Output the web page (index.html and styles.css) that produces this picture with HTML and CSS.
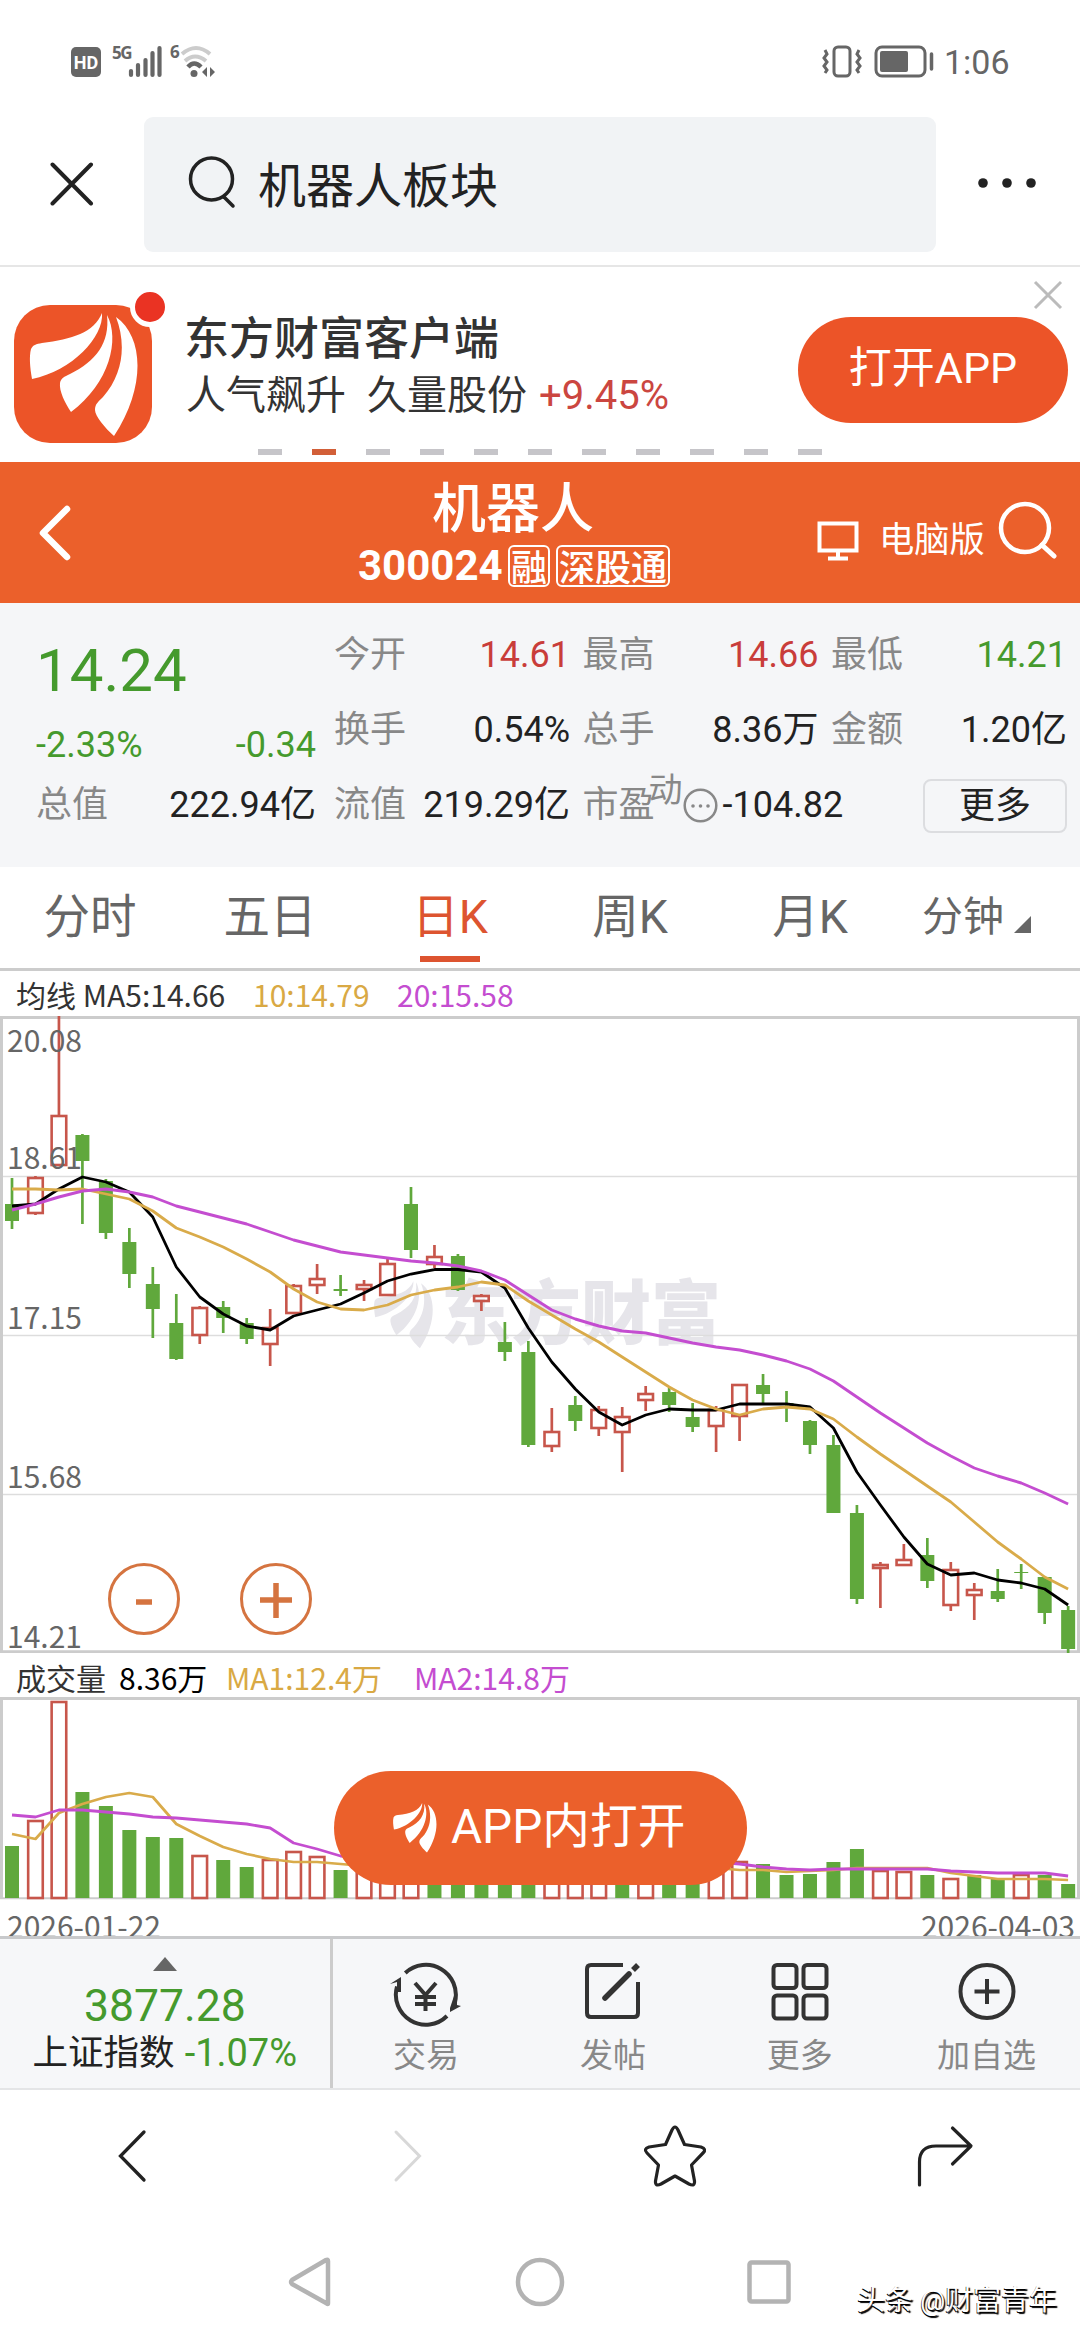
FILE: index.html
```html
<!DOCTYPE html>
<html lang="zh-CN">
<head>
<meta charset="utf-8">
<title>机器人 300024</title>
<link rel="stylesheet" href="styles.css">
</head>
<body>
<svg class="defs" width="0" height="0" aria-hidden="true">
  <symbol id="feather" viewBox="0 0 110 124">
    <path d="M74 0C76 24 44 58 4 66C2 54 1 44 3 36C5 32 8 31 14 30C44 26 66 20 74 0Z"/>
    <path d="M79 2C92 26 82 70 43 99C37 90 31 78 32 70C33 65 36 64 42 61C68 48 82 30 79 2Z"/>
    <path d="M88 4C116 24 118 74 86 123C77 115 67 103 67 97C67 91 70 89 75 84C96 60 98 30 88 4Z"/>
  </symbol>
</svg>
<div class="screen">
  <header class="status">
    <svg class="status-left" viewBox="68 40 150 42" width="150" height="42">
      <rect x="71" y="47" width="30" height="30" rx="5" fill="#666"/>
      <text x="86" y="69" class="hd">HD</text>
      <text x="112" y="59" class="tiny">5G</text>
      <path d="M131 71V75M138 65V75M145.500 60V75M152.500 53V75M159.500 48V75" stroke="#666" stroke-width="4.200" stroke-linecap="round"/>
      <text x="170" y="58" class="tiny">6</text>
      <path d="M182 54Q196 42 210 54" stroke="#ccc" stroke-width="4" fill="none"/>
      <path d="M185 61Q195 52 206 61" stroke="#ccc" stroke-width="4" fill="none"/>
      <path d="M188 67Q194 60 201 67" stroke="#666" stroke-width="4.500" fill="none"/>
      <circle cx="194" cy="73.500" r="3.500" fill="#666"/>
      <path d="M202 72l5-5v10zM215 72l-5-5v10z" fill="#666"/>
    </svg>
    <svg class="status-right" viewBox="820 40 118 42" width="118" height="42">
      <rect x="834" y="47" width="16" height="29" rx="4" fill="none" stroke="#666" stroke-width="3"/>
      <path d="M825 50l2 4-3 4 3 4-3 4 3 4-2 3M859 50l-2 4 3 4-3 4 3 4-3 4 2 3" fill="none" stroke="#666" stroke-width="3"/>
      <rect x="876" y="47" width="49" height="29" rx="6" fill="none" stroke="#666" stroke-width="3"/>
      <rect x="880" y="51" width="28" height="21" rx="2" fill="#666"/>
      <path d="M931.500 54V69" stroke="#666" stroke-width="3.500" stroke-linecap="round"/>
    </svg>
    <span class="clock">1:06</span>
  </header>

  <nav class="topnav">
    <svg width="44" height="44" viewBox="0 0 44 44"><path d="M2.500 2.500L41 41.500M41 2.500L2.500 41.500" stroke="#222" stroke-width="4" stroke-linecap="round"/></svg>
    <div class="search">
      <svg width="48" height="54" viewBox="0 0 48 54"><circle cx="23.500" cy="24" r="21" fill="none" stroke="#222" stroke-width="3.500"/><path d="M36 42L45 51" stroke="#222" stroke-width="3.500" stroke-linecap="round"/></svg>
      <span>机器人板块</span>
    </div>
    <svg class="dots" width="60" height="12" viewBox="0 0 60 12"><circle cx="6" cy="6" r="4.800"/><circle cx="30" cy="6" r="4.800"/><circle cx="54" cy="6" r="4.800"/></svg>
  </nav>

  <section class="banner">
    <div class="banner-main">
      <div class="applogo">
        <svg width="110" height="124"><use href="#feather"/></svg>
        <i class="badge"></i>
      </div>
      <div class="banner-text">
        <div class="banner-title">东方财富客户端</div>
        <div class="banner-sub"><span>人气飙升</span><span>久量股份</span><span class="gain">+9.45%</span></div>
      </div>
      <div class="open-app">打开APP</div>
    </div>
    <div class="pager"><i></i><i class="on"></i><i></i><i></i><i></i><i></i><i></i><i></i><i></i><i></i><i></i></div>
    <svg class="close" width="30" height="30" viewBox="0 0 30 30"><path d="M2 2L28 28M28 2L2 28" stroke="#bbb" stroke-width="3"/></svg>
  </section>

  <section class="stockbar">
    <svg class="back" width="34" height="56" viewBox="0 0 34 56"><path d="M29 4L5 28L29 52" fill="none" stroke="#fff" stroke-width="6.500" stroke-linecap="round" stroke-linejoin="round"/></svg>
    <div class="stock">
      <div class="stock-name">机器人</div>
      <div class="stock-code"><b>300024</b><em>融</em><em>深股通</em></div>
    </div>
    <div class="tools">
      <svg width="42" height="40" viewBox="0 0 42 40"><path d="M2.500 2.500H39.500V29.500H2.500ZM21 30V37M11 37.500H31" fill="none" stroke="#fff" stroke-width="4"/></svg>
      <span>电脑版</span>
      <svg class="find" width="60" height="60" viewBox="0 0 60 60"><circle cx="28" cy="28" r="24" fill="none" stroke="#fff" stroke-width="4.500"/><path d="M45 45L57 56" stroke="#fff" stroke-width="5" stroke-linecap="round"/></svg>
    </div>
  </section>

  <section class="quote">
    <div class="quote-left">
      <div class="price">14.24</div>
      <div class="change"><span>-2.33%</span><span>-0.34</span></div>
      <div class="pair"><label>总值</label><span>222.94亿</span></div>
    </div>
    <div class="quote-grid">
      <div class="pair"><label>今开</label><span class="up">14.61</span></div>
      <div class="pair"><label>最高</label><span class="up">14.66</span></div>
      <div class="pair"><label>最低</label><span class="down">14.21</span></div>
      <div class="pair"><label>换手</label><span>0.54%</span></div>
      <div class="pair"><label>总手</label><span>8.36万</span></div>
      <div class="pair"><label>金额</label><span>1.20亿</span></div>
      <div class="pair"><label>流值</label><span>219.29亿</span></div>
      <div class="pair pe"><label>市盈</label><sup>动</sup><svg width="35" height="35" viewBox="0 0 35 35"><circle cx="17.500" cy="17.500" r="15.800" fill="none" stroke="#888" stroke-width="2.500"/><g fill="#888"><circle cx="10" cy="18" r="1.800"/><circle cx="17.500" cy="18" r="1.800"/><circle cx="25" cy="18" r="1.800"/></g></svg><span>-104.82</span></div>
      <div class="more">更多</div>
    </div>
  </section>

  <nav class="tabs">
    <div class="tab">分时</div><div class="tab">五日</div><div class="tab active">日K</div><div class="tab">周K</div><div class="tab">月K</div>
    <div class="tab minute">分钟<svg width="17" height="17" viewBox="0 0 17 17"><path d="M17 0V17H0Z" fill="#666"/></svg></div>
  </nav>

  <div class="legend"><span class="ma5">均线 MA5:14.66</span><span class="ma10">10:14.79</span><span class="ma20">20:15.58</span></div>
  <div class="kline">
    <svg id="kline" viewBox="0 1016 1080 637" width="1080" height="637"></svg>
  </div>
  <div class="legend volume-legend"><span>成交量</span><span class="black">8.36万</span><span class="ma10">MA1:12.4万</span><span class="ma20">MA2:14.8万</span></div>
  <div class="volume">
    <svg id="volume" viewBox="0 1697 1080 239" width="1080" height="239"></svg>
    <div class="float-open"><svg width="45" height="50"><use href="#feather"/></svg><span>APP内打开</span></div>
  </div>

  <section class="actions">
    <div class="index">
      <svg width="24" height="14" viewBox="0 0 24 14"><path d="M12 0L24 14H0Z" fill="#666"/></svg>
      <div class="index-value">3877.28</div>
      <div class="index-name">上证指数 <span>-1.07%</span></div>
    </div>
    <div class="action">
      <svg width="72" height="66" viewBox="0 0 72 66"><g fill="none" stroke="#333" stroke-width="4"><path d="M15.300 11A30 30 0 0 1 65 40M57 54A30 30 0 0 1 7 24.500"/><path d="M25 21L35.500 33L46 21M35.500 33V49M25 35H46M25 42H46"/></g><path d="M0 22L11 15V30H7V20ZM71 44L60 50V46L64 34L67 36V43Z" fill="#333"/></svg>
      <span>交易</span>
    </div>
    <div class="action">
      <svg width="56" height="66" viewBox="0 0 56 66"><path d="M38 3H6Q2 3 2 7V51Q2 55 6 55H49Q53 55 53 51V20" fill="none" stroke="#333" stroke-width="4"/><path d="M20 36L44 12" stroke="#333" stroke-width="5.500" stroke-linecap="round"/><path d="M48 8L53 3" stroke="#333" stroke-width="5.500"/></svg>
      <span>发帖</span>
    </div>
    <div class="action">
      <svg width="58" height="66" viewBox="0 0 58 66"><g fill="none" stroke="#333" stroke-width="4"><rect x="2.500" y="3" width="23" height="23" rx="3.500"/><rect x="32.500" y="3" width="23" height="23" rx="3.500"/><rect x="2.500" y="33.500" width="23" height="23" rx="3.500"/><rect x="32.500" y="33.500" width="23" height="23" rx="3.500"/></g></svg>
      <span>更多</span>
    </div>
    <div class="action">
      <svg width="58" height="66" viewBox="0 0 58 66"><g fill="none" stroke="#333" stroke-width="4"><circle cx="29" cy="29.500" r="26.500"/><path d="M16.500 29.500H41.500M29 17V42"/></g></svg>
      <span>加自选</span>
    </div>
  </section>

  <nav class="browser">
    <svg width="270" height="70" viewBox="0 0 270 70"><path d="M144 11L120.500 35L144 59" fill="none" stroke="#222" stroke-width="3.300" stroke-linecap="round"/></svg>
    <svg width="270" height="70" viewBox="0 0 270 70"><path d="M126 11L149.500 35L126 59" fill="none" stroke="#d8d8d8" stroke-width="3" stroke-linecap="round"/></svg>
    <svg width="270" height="70" viewBox="0 0 270 70"><path d="M132 9Q135 3 138 9L144.500 23.500L161 26Q167 28 163 32L151.500 44L154.500 60Q155 66 149 63L135 55L121 63Q115 66 115.500 60L118.500 44L107 32Q103 28 109 26L125.500 23.500Z" fill="none" stroke="#222" stroke-width="3.200" stroke-linejoin="round"/></svg>
    <svg width="270" height="70" viewBox="0 0 270 70"><path d="M109.500 64V41Q109.500 25 126 25H160M142.500 7L161 25L142.500 43" fill="none" stroke="#222" stroke-width="3.200" stroke-linecap="round" stroke-linejoin="round"/></svg>
  </nav>

  <footer class="sysnav">
    <svg width="46" height="52" viewBox="0 0 46 52"><path d="M41 5V47Q41 49 39 47L5 28Q3 26 5 24L39 4Q41 3 41 5Z" fill="none" stroke="#b3b3b3" stroke-width="4.500" stroke-linejoin="round"/></svg>
    <svg width="50" height="52" viewBox="0 0 50 52"><circle cx="25" cy="26" r="22" fill="none" stroke="#b3b3b3" stroke-width="4.500"/></svg>
    <svg width="46" height="52" viewBox="0 0 46 52"><rect x="3.500" y="6.500" width="39" height="39" rx="2" fill="none" stroke="#b3b3b3" stroke-width="4.500"/></svg>
    <div class="credit">头条 @财富青年</div>
  </footer>
</div>
<script src="chart.js"></script>
</body>
</html>
```
FILE: styles.css
```css
* { box-sizing: border-box; }
body {
  margin: 0;
  background: #fff;
  color: #222;
  font-family: Roboto, "Noto Sans CJK SC", sans-serif;
}
svg { display: block; flex: none; }
.defs { position: absolute; }
.screen { width: 1080px; height: 2340px; overflow: hidden; background: #fff; }

.status { height: 117px; padding: 40px 0 0 68px; display: flex; align-items: flex-start; }
.status-right { margin-left: 602px; }
.hd { font: 700 18px Roboto, sans-serif; fill: #fff; text-anchor: middle; }
.tiny { font: 700 17px "Open Sans", sans-serif; fill: #666; letter-spacing: -1.5px; }
.clock { font-size: 34px; line-height: 44px; color: #666; margin-left: 6px; }

.topnav {
  height: 150px;
  padding-left: 50px;
  display: flex;
  align-items: flex-start;
  border-bottom: 2px solid #e6e6e6;
}
.topnav > svg { margin-top: 45px; }
.search {
  width: 792px;
  height: 135px;
  margin-left: 50px;
  padding-left: 44px;
  display: flex;
  align-items: center;
  background: #f1f3f5;
  border-radius: 9px;
}
.search svg { margin-top: -5px; }
.search span { margin-left: 22px; font-size: 48px; line-height: 60px; margin-top: 5px; }
.topnav .dots { margin: 60px 0 0 41px; fill: #222; }

.banner { position: relative; height: 195px; }
.banner-main { display: flex; height: 182px; align-items: flex-start; }
.applogo {
  position: relative;
  flex: none;
  width: 138px;
  height: 138px;
  margin: 38px 0 0 14px;
  padding: 8px 0 0 14px;
  border-radius: 36px;
  background: #ec5428;
  fill: #fff;
}
.badge {
  position: absolute;
  right: -18px;
  top: -18px;
  width: 40px;
  height: 40px;
  border-radius: 50%;
  background: #ea3323;
  border: 5px solid #fff;
}
.banner-text { width: 646px; padding: 41px 0 0 32px; }
.banner-title { font-size: 45px; line-height: 56px; font-weight: 500; color: #333; font-family: "Noto Sans CJK SC", sans-serif; }
.banner-sub { display: flex; font-size: 40px; line-height: 60px; color: #333; padding: 2px 0 0 2px; }
.banner-sub span + span { margin-left: 21px; }
.banner-sub .gain { color: #cb4640; margin-left: 12px; }
.open-app {
  width: 270px;
  height: 106px;
  margin-top: 50px;
  border-radius: 53px;
  background: #ec5428;
  color: #fff;
  text-align: center;
  font-size: 43px;
  line-height: 103px;
}
.pager { display: flex; gap: 30px; padding-left: 258px; }
.pager i { width: 24px; height: 6px; background: #c6c5c9; }
.pager .on { background: #d25f38; }
.close { position: absolute; left: 1033px; top: 13px; }

.stockbar { height: 141px; background: #eb602b; color: #fff; display: flex; align-items: flex-start; }
.back { margin: 43px 0 0 38px; }
.stock { width: 626px; margin-left: 108px; padding: 13px 0 0 178px; }
.stock-name { font-size: 54px; line-height: 60px; font-weight: 500; padding-left: 74px; font-family: "Noto Sans CJK SC", sans-serif; }
.stock-code { display: flex; align-items: center; height: 53px; margin-top: 4px; }
.stock-code b { font-size: 42px; line-height: 50px; font-weight: 700; width: 150px; }
.stock-code em {
  height: 42px;
  margin-right: 6px;
  padding: 0 1px;
  border: 2px solid #fff;
  border-radius: 6px;
  font: 500 36px/36px "Noto Sans CJK SC", sans-serif;
}
.tools { display: flex; align-items: flex-start; margin-left: 11px; padding-top: 36px; white-space: nowrap; }
.tools > svg:first-child { margin-top: 23px; }
.tools span { font-size: 35.3px; line-height: 46px; margin: 19px 0 0 20px; }
.tools .find { margin: 2px 0 0 12px; }

.quote { height: 264px; background: #f5f6f8; display: flex; padding: 15px 12px 0 36px; font-size: 36px; }
.quote-left { width: 280px; margin-right: 18px; }
.price { height: 96px; font-size: 60px; line-height: 106px; color: #459a2d; }
.change { height: 54px; display: flex; justify-content: space-between; color: #459a2d; line-height: 62px; }
.quote-grid { display: grid; grid-template-columns: 236px 236px 236px; column-gap: 12.5px; grid-auto-rows: 75px; }
.pair { height: 75px; display: flex; justify-content: space-between; line-height: 75px; }
.pair label { color: #888; }
.quote .up { color: #c93d3a; }
.quote .down { color: #459a2d; }
.pe { justify-content: flex-start; align-items: center; white-space: nowrap; }
.pe sup { font-size: 34px; line-height: 40px; color: #888; margin: -32px 0 0 -6px; }
.pe svg { margin-left: 0; }
.pe span { margin-left: 5px; }
.more {
  width: 144px;
  height: 54px;
  margin: 11px 0 0 92px;
  border: 2px solid #dcdde0;
  border-radius: 8px;
  text-align: center;
  line-height: 51px;
}

.tabs { height: 104px; display: flex; border-bottom: 3px solid #ccc; color: #666; }
.tab { width: 180px; text-align: center; font-size: 46.5px; line-height: 101px; }
.tab.active { color: #dd5430; display: flex; flex-direction: column; align-items: center; height: 101px; }
.tab.active::after { content: ""; width: 60px; height: 6px; background: #dd5430; margin-top: -12px; }
.tab.minute { display: flex; font-size: 41px; padding-left: 22px; }
.minute svg { margin: 49px 0 0 10px; }

.legend {
  height: 45px;
  padding-left: 16px;
  display: flex;
  font: 30px/47px "Noto Sans CJK SC", sans-serif;
  color: #333;
  white-space: pre;
}
.legend span:first-child { width: 237px; }
.legend .ma10 { color: #d9a944; width: 144px; }
.legend .ma20 { color: #c44dd0; }
.volume-legend { height: 44px; line-height: 49px; }
.volume-legend span:first-child { width: 103px; }
.volume-legend .black { color: #000; width: 107px; }
.volume-legend .ma10 { width: 188px; }

.kline { height: 637px; }
.volume { position: relative; height: 239px; }
.axis { font: 30px "Noto Sans CJK SC", sans-serif; fill: #666; }
.brand { font: 900 70px "Noto Sans CJK SC", sans-serif; fill: #e6e5ea; }
.end { text-anchor: end; }
.float-open {
  position: absolute;
  left: 334px;
  top: 74px;
  width: 413px;
  height: 114px;
  border-radius: 57px;
  background: #eb602b;
  color: #fff;
  fill: #fff;
  display: flex;
  align-items: center;
  padding-left: 58px;
  font-size: 47.7px;
  line-height: 110px;
}
.float-open span { margin: -3px 0 0 14px; }

.actions {
  height: 154px;
  display: flex;
  background: #f6f7f9;
  border-top: 3px solid #c8c9cb;
  border-bottom: 2px solid #e4e5e7;
}
.index { width: 333px; border-right: 3px solid #ccc; display: flex; flex-direction: column; align-items: center; padding-top: 18px; }
.index-value { font-size: 44.5px; line-height: 52px; color: #459a2d; margin-top: 9px; }
.index-name { font-size: 35.5px; line-height: 44px; margin-top: -1px; display: flex; gap: 10px; }
.index-name span { color: #459a2d; font-size: 38px; }
.action { width: 187px; padding-top: 23px; display: flex; flex-direction: column; align-items: center; }
.action span { font-size: 33px; line-height: 44px; margin-top: 6px; color: #888; }

.browser { height: 140px; display: flex; padding-top: 31px; }
.sysnav { position: relative; height: 110px; display: flex; padding: 26px 0 0 287px; }
.sysnav svg + svg { margin-left: 182px; }
.sysnav svg:nth-child(3) { margin-left: 181px; }
.credit {
  position: absolute;
  left: 857px;
  top: 51px;
  font-size: 28px;
  line-height: 40px;
  color: #fff;
  text-shadow: 1.5px 1.5px 1px #000, -0.5px 1px 0 #000;
  white-space: nowrap;
}
```
FILE: chart.js
```js
// Candles: [direction, high, body top, body bottom, low] in chart pixels.
const candles = [
  ['g',1178,1204,1221,1229],['r',1176,1178,1213,1215],['r',1016,1116,1165,1166],['g',1134,1135,1161,1224],
  ['g',1179,1181,1233,1239],['g',1228,1242,1274,1288],['g',1267,1284,1309,1338],['g',1294,1323,1359,1360],
  ['r',1306,1308,1335,1344],['g',1301,1307,1318,1333],['g',1318,1323,1339,1344],['r',1309,1328,1344,1366],
  ['r',1284,1286,1313,1314],['r',1264,1279,1285,1294],['g',1275,1289,1291,1296],['r',1280,1285,1289,1301],
  ['r',1258,1264,1295,1296],['g',1187,1204,1250,1258],['r',1245,1257,1264,1268],['g',1254,1256,1290,1291],
  ['r',1294,1296,1301,1311],['g',1322,1342,1352,1361],['g',1341,1352,1445,1447],['r',1408,1432,1446,1452],
  ['g',1396,1405,1421,1431],['r',1406,1410,1428,1436],['r',1407,1417,1432,1472],['r',1386,1394,1400,1411],
  ['g',1388,1392,1405,1412],['g',1403,1417,1427,1432],['r',1406,1410,1426,1452],['r',1384,1385,1416,1441],
  ['g',1374,1385,1394,1403],['g',1391,1403,1405,1422],['g',1420,1421,1445,1454],['g',1435,1445,1513,1513],
  ['g',1505,1513,1599,1604],['r',1562,1565,1568,1608],['r',1544,1560,1565,1566],['g',1538,1555,1581,1588],
  ['r',1562,1570,1605,1611],['r',1583,1590,1595,1620],['g',1569,1591,1599,1602],['g',1564,1572,1573,1589],
  ['g',1576,1577,1613,1624],['g',1606,1610,1649,1653]
];
const ma5 = [1206,1204,1189,1177,1182,1192,1217,1267,1297,1314,1326,1330,1316,1310,1304,1293,1281,1274,1269.5,1269.5,1272,1288,1328,1362,1389,1412,1425,1415,1409,1410,1410,1404,1404,1404,1407,1428,1472,1505,1537,1564,1575,1573,1580,1583,1589,1605];
const ma10 = [1189,1189,1190,1189,1194,1199,1211,1228,1237,1247,1259,1272,1289,1302,1309,1310,1305,1295,1290,1287,1282,1285,1301,1315,1329,1342,1357,1372,1387,1400,1409,1415,1409,1407,1409,1419,1437,1454,1470,1486,1502,1522,1542,1559,1577,1589];
const ma20 = [1210,1204,1197,1191,1189,1192,1197,1206,1212,1218,1224,1232,1240,1246,1252,1255,1258,1261,1263,1266,1271,1280,1295,1310,1319,1326,1331,1333,1338,1343,1347,1350,1355,1361,1369,1381,1397,1413,1428,1443,1456,1468,1476,1483,1493,1504];
const volumes = [['g',1846],['r',1821],['r',1702],['g',1792],['g',1806],['g',1830],['g',1837],['g',1838],['r',1856],['g',1860],['g',1867],['r',1860],['r',1852],['r',1857],['g',1870],['r',1872],['r',1866],['r',1864],['g',1862],['g',1862],['g',1870],['g',1872],['g',1862],['r',1864],['r',1868],['r',1870],['g',1872],['r',1870],['g',1870],['g',1872],['r',1870],['r',1862],['g',1864],['g',1875],['g',1874],['g',1862],['g',1849],['r',1871],['r',1872],['g',1875],['r',1879],['g',1875],['g',1879],['r',1875],['g',1875],['g',1884]];
const volMa1 = [1834,1839,1813,1804,1797,1793,1797,1824,1836,1847,1854,1859,1862,1862,1864,1866,1866,1866,1866,1866,1866,1866,1866,1866,1866,1866,1866,1866,1866,1866,1868,1870,1870,1872,1871,1870,1868,1868,1868,1868,1873,1876,1879,1879,1879,1880];
const volMa2 = [1815,1817,1810,1810,1812,1814,1817,1818,1820,1822,1824,1828,1843,1849,1856,1858,1860,1860,1860,1860,1860,1860,1860,1860,1860,1860,1860,1860,1860,1860,1862,1864,1867,1869,1870,1869,1869,1869,1869,1869,1871,1872,1873,1873,1873,1876];

const GREEN = '#60a83c', RED = '#c7564b', GOLD = '#d9ab4a', PURPLE = '#c44dd0';
const x = i => 12 + i * 23.47;
const line = (a, color, w) =>
  `<polyline points="${a.map((y, i) => x(i).toFixed(1) + ',' + y).join(' ')}" fill="none" stroke="${color}" stroke-width="${w}" stroke-linejoin="round"/>`;
const body = (i, dir, top, bottom) => dir === 'g'
  ? `<rect x="${x(i) - 7}" y="${top}" width="14" height="${bottom - top}" fill="${GREEN}"/>`
  : `<rect x="${x(i) - 7.3}" y="${top}" width="14.6" height="${bottom - top}" fill="none" stroke="${RED}" stroke-width="2.6"/>`;
const wick = (i, dir, a, b) =>
  `<path d="M${x(i)} ${a}V${b}" stroke="${dir === 'g' ? GREEN : RED}" stroke-width="2.7"/>`;

let k = '<g fill="#e6e5ea"><use href="#feather" x="373" y="1279" width="60" height="72"/></g>' +
  '<text x="441" y="1339" class="brand">东方财富</text>' +
  '<path d="M0 1176.500H1080M0 1335.500H1080M0 1494.500H1080" stroke="#ddd" stroke-width="1.5"/>' +
  '<path d="M0 1017.500H1080M0 1651.700H1080M1.500 1016V1653M1078.500 1016V1653" stroke="#ccc" stroke-width="3"/>';
candles.forEach(([d, h, t, b, l], i) => {
  k += wick(i, d, h, t) + wick(i, d, b, l) + body(i, d, t, b);
});
k += line(ma5, '#000', 2.8) + line(ma10, GOLD, 2.8) + line(ma20, PURPLE, 2.9);
[['20.08',1052],['18.61',1169],['17.15',1329],['15.68',1488],['14.21',1648]].forEach(([t, y]) => {
  k += `<text x="7" y="${y}" class="axis">${t}</text>`;
});
k += '<g fill="none" stroke="#d57440" stroke-width="3"><circle cx="144" cy="1599" r="34.5"/><circle cx="276" cy="1599" r="34.5"/></g>' +
  '<path d="M136 1602H152M260 1600H292M276 1583V1618" stroke="#d57440" stroke-width="5.5"/>';
document.getElementById('kline').innerHTML = k;

let v = '<path d="M0 1698.500H1080M1.500 1697V1898M1078.500 1697V1898" stroke="#ccc" stroke-width="3"/>' +
  '<path d="M0 1898.300H1080" stroke="#ccc" stroke-width="2"/>';
volumes.forEach(([d, t], i) => { v += body(i, d, t, 1898); });
v += line(volMa1, GOLD, 2.7) + line(volMa2, PURPLE, 2.8);
v += '<text x="7" y="1938" class="axis">2026-01-22</text><text x="1075" y="1938" class="axis end">2026-04-03</text>';
document.getElementById('volume').innerHTML = v;
```
